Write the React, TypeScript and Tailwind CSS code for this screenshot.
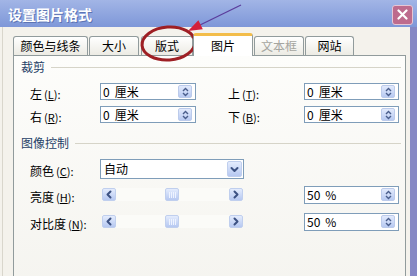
import React from "react";

function Chev({ dir }: { dir: "left" | "right" | "down" }) {
  const d =
    dir === "left" ? "M5.5 1.5 L2.5 4.5 L5.5 7.5" : dir === "right" ? "M2.5 1.5 L5.5 4.5 L2.5 7.5" : "M1.5 3 L4.5 6 L7.5 3";
  return (
    <svg width="9" height="9" viewBox="0 0 9 9">
      <path d={d} stroke="#3d5283" strokeWidth="2" fill="none" strokeLinecap="round" strokeLinejoin="round" />
    </svg>
  );
}

function Spin() {
  return (
    <div className="w-[14px] h-[13px] mr-[3px] rounded-[2px] bg-linear-to-b from-[#e2eafc] to-[#b8caf2] border border-[#bccbeb] flex items-center justify-center">
      <svg width="7" height="10" viewBox="0 0 7 10">
        <path d="M1 4 L3.5 1.5 L6 4" stroke="#4a5e8c" strokeWidth="1.4" fill="none" />
        <path d="M1 6 L3.5 8.5 L6 6" stroke="#4a5e8c" strokeWidth="1.4" fill="none" />
      </svg>
    </div>
  );
}

function NumInput({ a, b, w, h }: { a: string; b: string; w: string; h: string }) {
  return (
    <div className={`${w} ${h} bg-white border border-[#7f9db9] flex items-center justify-between pl-[2px]`}>
      <span className="text-[12px] leading-none text-black flex gap-[5px]">
        <span>{a}</span>
        <span>{b}</span>
      </span>
      <Spin />
    </div>
  );
}

function Label({ t, k }: { t: string; k: string }) {
  return (
    <span className="text-[12px] leading-none text-black">
      {t}
      <span className="text-[11px] ml-[2px]">
        (<u>{k}</u>):
      </span>
    </span>
  );
}

function SBtn({ dir }: { dir: "left" | "right" | "down" }) {
  return (
    <div className="w-[14px] h-[13px] rounded-[2px] bg-linear-to-b from-[#e4ecfd] to-[#b6c8f1] border border-[#c0cfee] flex items-center justify-center">
      <Chev dir={dir} />
    </div>
  );
}

function Slider() {
  return (
    <div className="w-[141px] h-[13px] ml-[2px] flex items-center bg-[#fbfbf8]">
      <SBtn dir="left" />
      <div className="w-[49px]" />
      <div className="w-[14px] h-[13px] rounded-[2px] bg-linear-to-b from-[#e4ecfd] to-[#b6c8f1] border border-[#c0cfee] flex items-center justify-center gap-[1px]">
        <div className="w-px h-[6px] bg-[#eef3ff]" />
        <div className="w-px h-[6px] bg-[#eef3ff]" />
        <div className="w-px h-[6px] bg-[#eef3ff]" />
        <div className="w-px h-[6px] bg-[#eef3ff]" />
      </div>
      <div className="flex-1" />
      <SBtn dir="right" />
    </div>
  );
}

function Header({ t }: { t: string }) {
  return (
    <div className="flex items-center h-[14px] pl-[7px]">
      <span className="text-[12px] leading-none text-[#1f3f66]">{t}</span>
      <div className="flex-1 h-px bg-[#d6d4c8] ml-[6px] mr-[4px]" />
    </div>
  );
}

function Tab({ t, w, ml, dis }: { t: string; w: string; ml: string; dis?: boolean }) {
  return (
    <div
      className={`${w} ${ml} h-[19px] border border-b-0 border-[#919b9c] rounded-t-[3px] bg-linear-to-b from-white to-[#ecebe4] flex items-center justify-center text-[12px] leading-none ${
        dis ? "text-[#a5a5a0]" : "text-black"
      }`}
    >
      {t}
    </div>
  );
}

export default function App() {
  return (
    <div className="w-[417px] h-[276px] overflow-hidden relative bg-[#f4f2ec] flex flex-col font-['Noto_Sans_CJK_SC',sans-serif]">
      {/* title bar */}
      <div className="h-[27px] shrink-0 bg-linear-to-b from-[#a2b5e6] to-[#7e97d8] flex items-center justify-between pl-[8px] pr-[4px]">
        <span className="text-[14px] font-bold text-white leading-none [text-shadow:1px_1px_0_#5d74b4]">设置图片格式</span>
        <div className="w-[21px] h-[20px] mt-[2px] rounded-[3px] bg-[#bd6b8d] border border-[#e6c6d4] flex items-center justify-center">
          <svg width="11" height="11" viewBox="0 0 11 11">
            <path d="M1.5 1.5 L9.5 9.5 M9.5 1.5 L1.5 9.5" stroke="white" strokeWidth="2.2" strokeLinecap="round" />
          </svg>
        </div>
      </div>
      {/* body */}
      <div className="flex-1 flex">
        <div className="flex-1 flex flex-col pl-[10px] pr-[4px] border-l border-[#d9d6cc] ml-[2px]">
          {/* tabs */}
          <div className="mt-[6px] h-[22px] flex items-end">
            <Tab t="颜色与线条" w="w-[75px]" ml="ml-0" />
            <Tab t="大小" w="w-[50px]" ml="ml-[1px]" />
            <Tab t="版式" w="w-[52px]" ml="ml-[2px]" />
            <div className="relative z-10 w-[60px] h-[23px] mb-[-1px] bg-white border-x border-[#919b9c] border-t-[3px] border-t-[#f3bd4a] rounded-t-[3px] flex items-center justify-center text-[12px] leading-none text-black">
              图片
            </div>
            <Tab t="文本框" w="w-[50px]" ml="ml-[1px]" dis />
            <Tab t="网站" w="w-[49px]" ml="ml-[1px]" />
          </div>
          {/* panel */}
          <div className="h-[260px] border border-[#919b9c] bg-linear-to-b from-[#fdfdfb] to-[#f4f3ee] pt-[4px] flex flex-col">
            <Header t="裁剪" />
            <div className="mt-[6px] h-[23px] flex items-center">
              <div className="w-[86px] pl-[16px]">
                <Label t="左" k="L" />
              </div>
              <NumInput a="0" b="厘米" w="w-[96px]" h="h-[17px]" />
              <div className="ml-[32px] w-[76px]">
                <Label t="上" k="T" />
              </div>
              <NumInput a="0" b="厘米" w="w-[95px]" h="h-[17px]" />
            </div>
            <div className="h-[23px] flex items-center">
              <div className="w-[86px] pl-[16px]">
                <Label t="右" k="R" />
              </div>
              <NumInput a="0" b="厘米" w="w-[96px]" h="h-[17px]" />
              <div className="ml-[32px] w-[76px]">
                <Label t="下" k="B" />
              </div>
              <NumInput a="0" b="厘米" w="w-[95px]" h="h-[17px]" />
            </div>
            <div className="mt-[10px]">
              <Header t="图像控制" />
            </div>
            <div className="mt-[7px] h-[24px] flex items-center">
              <div className="w-[86px] pl-[16px]">
                <Label t="颜色" k="C" />
              </div>
              <div className="w-[144px] h-[20px] bg-white border border-[#7f9db9] flex items-center justify-between pl-[3px]">
                <span className="text-[12px] leading-none text-black">自动</span>
                <div className="w-[15px] h-[16px] mr-[1px] rounded-[2px] bg-linear-to-b from-[#e4ecfd] to-[#b6c8f1] border border-[#c0cfee] flex items-center justify-center">
                  <Chev dir="down" />
                </div>
              </div>
            </div>
            <div className="h-[27px] flex items-center">
              <div className="w-[86px] pl-[16px]">
                <Label t="亮度" k="H" />
              </div>
              <Slider />
              <div className="ml-[61px]">
                <NumInput a="50" b="%" w="w-[95px]" h="h-[18px]" />
              </div>
            </div>
            <div className="h-[27px] flex items-center">
              <div className="w-[86px] pl-[16px]">
                <Label t="对比度" k="N" />
              </div>
              <Slider />
              <div className="ml-[61px]">
                <NumInput a="50" b="%" w="w-[95px]" h="h-[18px]" />
              </div>
            </div>
          </div>
        </div>
        <div className="w-[7px] bg-[#8587c4]" />
      </div>
      {/* annotation overlay */}
      <svg className="absolute left-0 top-0 pointer-events-none" width="417" height="276" viewBox="0 0 417 276">
        <ellipse cx="168.5" cy="43.5" rx="26.5" ry="16.5" transform="rotate(-4 168.5 43.5)" fill="none" stroke="#9e1f24" strokeWidth="3" />
        <line x1="241" y1="5" x2="198" y2="26" stroke="#5b3d9c" strokeWidth="1.3" />
        <polygon points="188,31 202.8,29.3 198.4,20.3" fill="#d3203a" />
      </svg>
    </div>
  );
}
